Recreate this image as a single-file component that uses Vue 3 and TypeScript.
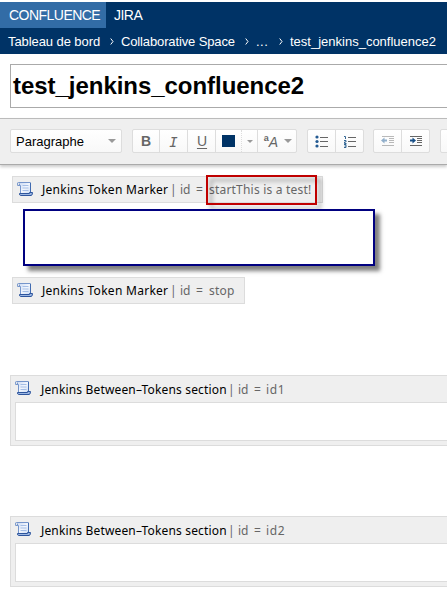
<script setup lang="ts">
import { ref } from 'vue'

interface Macro {
  name: string
  value: string
}

const title = ref('test_jenkins_confluence2')
const sections: Macro[] = [
  { name: 'Jenkins Between–Tokens section', value: 'id1' },
  { name: 'Jenkins Between–Tokens section', value: 'id2' },
]
</script>

<template>
  <svg class="symbols" aria-hidden="true">
    <defs>
      <linearGradient id="paper" x1="0" y1="0" x2="1" y2="1">
        <stop offset="0" stop-color="#c9d9f4" />
        <stop offset="0.5" stop-color="#f2f6fd" />
        <stop offset="1" stop-color="#ccdcf4" />
      </linearGradient>
      <symbol id="scroll" viewBox="0 0 16 16">
        <path d="M2.500 1.500H13.500V12.500H3.500V4.500Z" fill="url(#paper)" />
        <path d="M3.500 13V4.500H.6V2Q.6 1.500 1.500 1.500H13" fill="none" stroke="#7595cb" />
        <path d="M2.500 2.500V4" stroke="#7595cb" />
        <path d="M13.500 1.500V11.500" stroke="#416bb0" />
        <path d="M2.500 12.500H12.500V11.500H15.500Q15.500 14.500 14 14.500H3.500Q2.500 14.500 2.500 12.500Z" fill="#9bb6e2" stroke="#2e559d" />
        <path d="M5.500 4.500H11.500M5.500 7H11.500M5.500 9.500H11.500" stroke="#a5bee6" />
      </symbol>
    </defs>
  </svg>

  <div class="page">
    <header class="header">
      <nav class="tabs">
        <a class="tab active">CONFLUENCE</a>
        <a class="tab">JIRA</a>
      </nav>
      <nav class="crumbs">
        <span class="crumb dashboard">Tableau de bord</span>
        <svg class="chevron" viewBox="0 0 4 7"><path d="M.7 .5L3 3.500L.7 6.500" /></svg>
        <span class="crumb space">Collaborative Space</span>
        <svg class="chevron" viewBox="0 0 4 7"><path d="M.7 .5L3 3.500L.7 6.500" /></svg>
        <span class="crumb dots">...</span>
        <svg class="chevron" viewBox="0 0 4 7"><path d="M.7 .5L3 3.500L.7 6.500" /></svg>
        <span class="crumb current">test_jenkins_confluence2</span>
      </nav>
    </header>

    <div class="title-row"><div class="title">{{ title }}</div></div>

    <div class="toolbar">
      <div class="group select">
        <span>Paragraphe</span>
        <i class="caret"></i>
      </div>
      <div class="group">
        <button class="btn bold">B</button>
        <button class="btn italic">I</button>
        <button class="btn underline">U</button>
        <button class="btn color"><i class="swatch"></i></button>
        <button class="btn more"><i class="caret small"></i></button>
        <button class="btn style"><span class="style-glyph"><sup>a</sup>A</span><i class="caret"></i></button>
      </div>
      <div class="group lists">
        <button class="btn">
          <svg width="14" height="13" viewBox="0 0 14 13">
            <g fill="#235a92"><circle cx="2" cy="2" r="1.600" /><circle cx="2" cy="6.500" r="1.600" /><circle cx="2" cy="11" r="1.600" /></g>
            <path d="M5 2.500H13M5 6.500H13M5 11.500H13" stroke="#666" />
          </svg>
        </button>
        <button class="btn">
          <svg width="14" height="13" viewBox="0 0 14 13">
            <path d="M1 1.500H2.500V4M1 5.500H3V7H1.500V8.500H3.500M1 9.500H3V12.500H1M1.500 11H3" fill="none" stroke="#336694" />
            <path d="M5 2.500H13M5 6.500H13M5 11.500H13" stroke="#666" />
          </svg>
        </button>
      </div>
      <div class="group indents">
        <button class="btn faded">
          <svg width="14" height="12" viewBox="0 0 14 12">
            <path d="M1 1.500H13M8 3.500H13M8 5.500H13M8 7.500H13M1 10.500H13" stroke="#777" />
            <path d="M0 5.500L3.500 2.500V4.500H6V6.500H3.500V8.500Z" fill="#28649b" />
          </svg>
        </button>
        <button class="btn">
          <svg width="14" height="12" viewBox="0 0 14 12">
            <path d="M1 1.500H13M8 3.500H13M8 5.500H13M8 7.500H13M1 10.500H13" stroke="#666" />
            <path d="M7 5.500L3.500 2.500V4.500H1V6.500H3.500V8.500Z" fill="#174f87" />
          </svg>
        </button>
      </div>
      <div class="group"><button class="btn"></button></div>
    </div>

    <main class="editor">
      <div class="marker start">
        <svg class="icon"><use href="#scroll" /></svg>
        <span class="name">Jenkins Token Marker</span>
        <span class="param"><span>|</span><span>id</span><span>=</span></span>
        <span class="value highlighted">startThis is a test!</span>
        <div class="highlight"></div>
      </div>
      <div class="content-box"></div>
      <div class="marker stop">
        <svg class="icon"><use href="#scroll" /></svg>
        <span class="name">Jenkins Token Marker</span>
        <span class="param"><span>|</span><span>id</span><span>=</span></span>
        <span class="value">stop</span>
      </div>
      <section v-for="section in sections" :key="section.value" class="section">
        <div class="section-head">
          <svg class="icon"><use href="#scroll" /></svg>
          <span class="name">{{ section.name }}</span>
          <span class="param"><span>|</span><span>id</span><span>=</span></span>
          <span class="value">{{ section.value }}</span>
        </div>
        <div class="section-body"></div>
      </section>
    </main>
  </div>
</template>

<style>
body {
  margin: 0;
  background: #fff;
}
</style>

<style scoped>
* {
  box-sizing: border-box;
}
.symbols {
  position: absolute;
  width: 0;
  height: 0;
}
.page {
  height: 605px;
  padding-top: 2px;
  overflow: hidden;
  font-family: "Liberation Sans", Arial, sans-serif;
  white-space: nowrap;
}
.header {
  height: 52px;
  background: #003366;
  color: #fff;
}
.tabs {
  display: flex;
  height: 26px;
}
.tab {
  padding: 0 8px;
  font-size: 14px;
  line-height: 27px;
  letter-spacing: -0.53px;
}
.tab.active {
  width: 106px;
  padding-left: 9px;
  background: #326ca6;
}
.crumbs {
  display: flex;
  align-items: center;
  height: 26px;
  padding-left: 8px;
  font-size: 13px;
  line-height: 27px;
}
.crumb {
  flex: none;
}
.dashboard {
  width: 102px;
  letter-spacing: -0.08px;
}
.space {
  width: 124px;
  letter-spacing: -0.13px;
}
.dots {
  width: 23px;
  letter-spacing: 0.5px;
}
.chevron {
  flex: none;
  width: 4px;
  height: 7px;
  margin-right: 7px;
  fill: none;
  stroke: #fff;
}
.title-row {
  height: 64px;
  padding: 10px 0 0 10px;
}
.title {
  width: 460px;
  height: 44px;
  padding-left: 2px;
  border: 1px solid #aaa;
  font-size: 24px;
  font-weight: bold;
  line-height: 42px;
  letter-spacing: -0.04px;
  color: #000;
}
.toolbar {
  display: flex;
  align-items: center;
  gap: 10px;
  height: 47px;
  padding: 0 0 1px 10px;
  border-top: 1px solid #bbb;
  border-bottom: 1px solid #aaa;
  background: #efefef;
  box-shadow: 0 2px 3px #ccc;
}
.group {
  display: flex;
  flex: none;
  height: 24px;
  border: 1px solid #ddd;
  border-radius: 2px;
  background: linear-gradient(#fff, #f8f8f8);
}
.select {
  align-items: center;
  justify-content: space-between;
  width: 112px;
  padding: 0 5px;
  font-size: 13px;
}
.caret {
  border: 4px solid transparent;
  border-top-color: #999;
  border-bottom: 0;
}
.caret.small {
  border-width: 3px;
  border-bottom: 0;
}
.btn {
  display: flex;
  align-items: center;
  justify-content: center;
  width: 28px;
  height: 22px;
  padding: 0;
  border: 0;
  border-right: 1px solid #ddd;
  background: transparent;
  color: #666;
  font: 14px/22px "Liberation Sans", Arial, sans-serif;
}
.btn:last-child {
  width: 27px;
  border-right: 0;
}
.indents {
  margin-left: -1px;
}
.bold {
  width: 27px;
  font-weight: bold;
}
.italic {
  padding-top: 1px;
  font-family: "DejaVu Sans Mono", monospace;
  font-style: italic;
}
.underline {
  padding-left: 1px;
  text-decoration: underline;
  text-underline-offset: 2px;
}
.color {
  width: 26px;
  border-right-style: dotted;
}
.swatch {
  width: 13px;
  height: 12px;
  background: #003366;
}
.more {
  width: 16px;
}
.btn.style {
  width: 38px;
  padding-left: 2px;
  gap: 6px;
}
.style-glyph {
  position: relative;
  top: 1px;
  font-style: italic;
}
.style-glyph sup {
  font-size: 9px;
  font-style: normal;
  font-weight: bold;
  line-height: 1;
}
.faded svg {
  opacity: 0.5;
}
.editor {
  padding: 11px 0 0 10px;
  font-family: "Noto Sans", "Open Sans", sans-serif;
  font-size: 12px;
  color: #000;
}
.marker {
  position: relative;
  display: flex;
  align-items: center;
  height: 27px;
  margin-left: 2px;
  padding-left: 3px;
  border: 1px solid #dcdcdc;
  background: #efefef;
}
.start {
  width: 311px;
}
.stop {
  width: 233px;
}
.icon {
  flex: none;
  width: 16px;
  height: 16px;
  margin: -2px 9px 0 0;
}
.section .icon {
  margin-right: 10px;
}
.name {
  flex: none;
  width: 128px;
  letter-spacing: 0.28px;
}
.param {
  display: grid;
  flex: none;
  grid-template-columns: 10px 16px 12px;
  color: #666;
}
.value {
  color: #666;
  letter-spacing: 0.2px;
}
.marker .value {
  padding-left: 1px;
}
.highlight {
  position: absolute;
  top: -2px;
  left: 193px;
  width: 111px;
  height: 30px;
  border: 2px solid #c00000;
  filter: drop-shadow(4px 4px 2px rgb(0 0 0 / 35%));
}
.content-box {
  position: relative;
  width: 352px;
  height: 57px;
  margin: 6px 0 11px 13px;
  border: 2px solid #000080;
  background: #fff;
  box-shadow: 5px 5px 4px rgb(0 0 0 / 50%);
}
.section {
  width: 460px;
  height: 71px;
  margin-top: 71px;
  padding-left: 4px;
  border: 1px solid #dcdcdc;
  background: #efefef;
}
.section + .section {
  margin-top: 70px;
}
.section-head {
  display: flex;
  align-items: center;
  height: 26px;
}
.section-head .name {
  width: 187px;
  letter-spacing: 0.16px;
}
.section-head .value {
  letter-spacing: 0.6px;
}
.marker .icon {
  margin-left: 1px;
}
.section-body {
  height: 39px;
  border: 1px solid #dcdcdc;
  background: #fff;
}
</style>
